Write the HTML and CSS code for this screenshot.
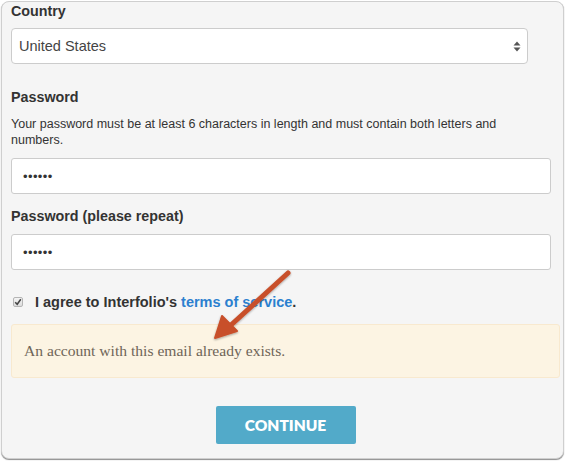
FILE: index.html
```html
<!DOCTYPE html>
<html>
<head>
<meta charset="utf-8">
<link rel="stylesheet" href="styles.css">
</head>
<body>
<div class="panel">
  <div class="label label-country">Country</div>
  <div class="select">
    <span>United States</span>
    <svg class="updown" width="8" height="11" viewBox="0 0 8 11"><path d="M4 0.5 L7.5 4.5 H0.5 Z M4 10.5 L7.5 6.5 H0.5 Z" fill="#555"/></svg>
  </div>
  <div class="label label-pass">Password</div>
  <p class="help">Your password must be at least 6 characters in length and must contain both letters and numbers.</p>
  <div class="input input-1">••••••</div>
  <div class="label label-repeat">Password (please repeat)</div>
  <div class="input input-2">••••••</div>
  <div class="agree">
    <span class="check"><svg width="8" height="8" viewBox="0 0 8 8"><path d="M1.2 4.2 L3.2 6.3 L6.8 1.2" fill="none" stroke="#444" stroke-width="1.5"/></svg></span>
    <span class="agree-text">I agree to Interfolio's <a class="link">terms of service</a>.</span>
  </div>
  <div class="alert">An account with this email already exists.</div>
  <div class="actions"><button class="btn">CONTINUE</button></div>
</div>
<svg class="arrow" width="567" height="463" viewBox="0 0 567 463">
  <defs>
    <filter id="sh" x="-20%" y="-20%" width="140%" height="140%">
      <feDropShadow dx="0" dy="1" stdDeviation="1" flood-color="#000" flood-opacity="0.35"/>
    </filter>
  </defs>
  <g filter="url(#sh)">
    <line x1="288" y1="273" x2="231" y2="325" stroke="#c8502b" stroke-width="5" stroke-linecap="round"/>
    <path d="M215 338 L222 316 L237 331 Z" fill="#c8502b" stroke="#c8502b" stroke-width="2" stroke-linejoin="round"/>
  </g>
</svg>
</body>
</html>
```

FILE: styles.css
```css
html, body {
  margin: 0;
  padding: 0;
  background: #ffffff;
}
body {
  width: 567px;
  height: 463px;
  position: relative;
  overflow: hidden;
  font-family: "Liberation Sans", Arial, sans-serif;
  color: #333;
}
.panel {
  margin: 1px 0 0 1px;
  width: 563px;
  height: 458px;
  box-sizing: border-box;
  border: 1px solid #cfcfcf;
  border-radius: 8px;
  background: #f5f5f5;
  box-shadow: 0 1px 1px rgba(0,0,0,0.45);
  padding: 0 0 0 9px;
  display: flex;
  flex-direction: column;
  align-items: flex-start;
}
.label {
  font-size: 14.3px;
  line-height: 18px;
  font-weight: bold;
  color: #333;
}
.label-country { margin-top: 0; }
.select {
  margin-top: 8px;
  width: 517px;
  height: 36px;
  box-sizing: border-box;
  border: 1px solid #cccccc;
  border-radius: 4px;
  background: #fff;
  display: flex;
  align-items: center;
  justify-content: space-between;
  padding: 0 6px 0 7px;
  font-size: 14.5px;
  color: #444;
}
.updown { display: block; margin-top: 1px; }
.label-pass { margin-top: 24px; }
.help {
  margin: 10px 0 0 0;
  font-size: 12.5px;
  line-height: 16px;
  color: #333;
  width: 530px;
}
.input {
  width: 540px;
  height: 36px;
  box-sizing: border-box;
  border: 1px solid #cccccc;
  border-radius: 3px;
  background: #fff;
  display: flex;
  align-items: center;
  padding: 0 0 0 11px;
  font-size: 13px;
  letter-spacing: 0.4px;
  color: #333;
}
.input-1 { margin-top: 10px; }
.label-repeat { margin-top: 13px; }
.input-2 { margin-top: 9px; }
.agree {
  margin-top: 23px;
  display: flex;
  align-items: center;
  height: 18px;
}
.check {
  width: 10px;
  height: 10px;
  box-sizing: border-box;
  margin-left: 2px;
  border: 1px solid #b5b5b5;
  border-radius: 2px;
  background: linear-gradient(#f4f4f4, #dcdcdc);
  display: flex;
  align-items: center;
  justify-content: center;
}
.check svg { display: block; }
.agree-text {
  margin-left: 12px;
  font-size: 14.5px;
  line-height: 18px;
  font-weight: bold;
  color: #333;
}
.link { color: #2b80cf; text-decoration: none; }
.alert {
  margin-top: 13px;
  width: 549px;
  height: 54px;
  box-sizing: border-box;
  border: 1px solid #f8e9cf;
  border-radius: 3px;
  background: #fcf4e3;
  display: flex;
  align-items: center;
  padding: 0 0 0 12px;
  font-family: "Liberation Serif", "Times New Roman", serif;
  font-size: 15.6px;
  color: #6f6558;
}
.actions {
  width: 549px;
  display: flex;
  justify-content: center;
  margin-top: 28px;
}
.btn {
  width: 140px;
  height: 38px;
  border: none;
  border-radius: 2px;
  background: #52aac9;
  color: #fff;
  font-family: "Lato", "Liberation Sans", sans-serif;
  font-weight: 800;
  font-size: 15.5px;
  padding: 0;
}
.arrow {
  position: absolute;
  left: 0;
  top: 0;
  pointer-events: none;
}
```
